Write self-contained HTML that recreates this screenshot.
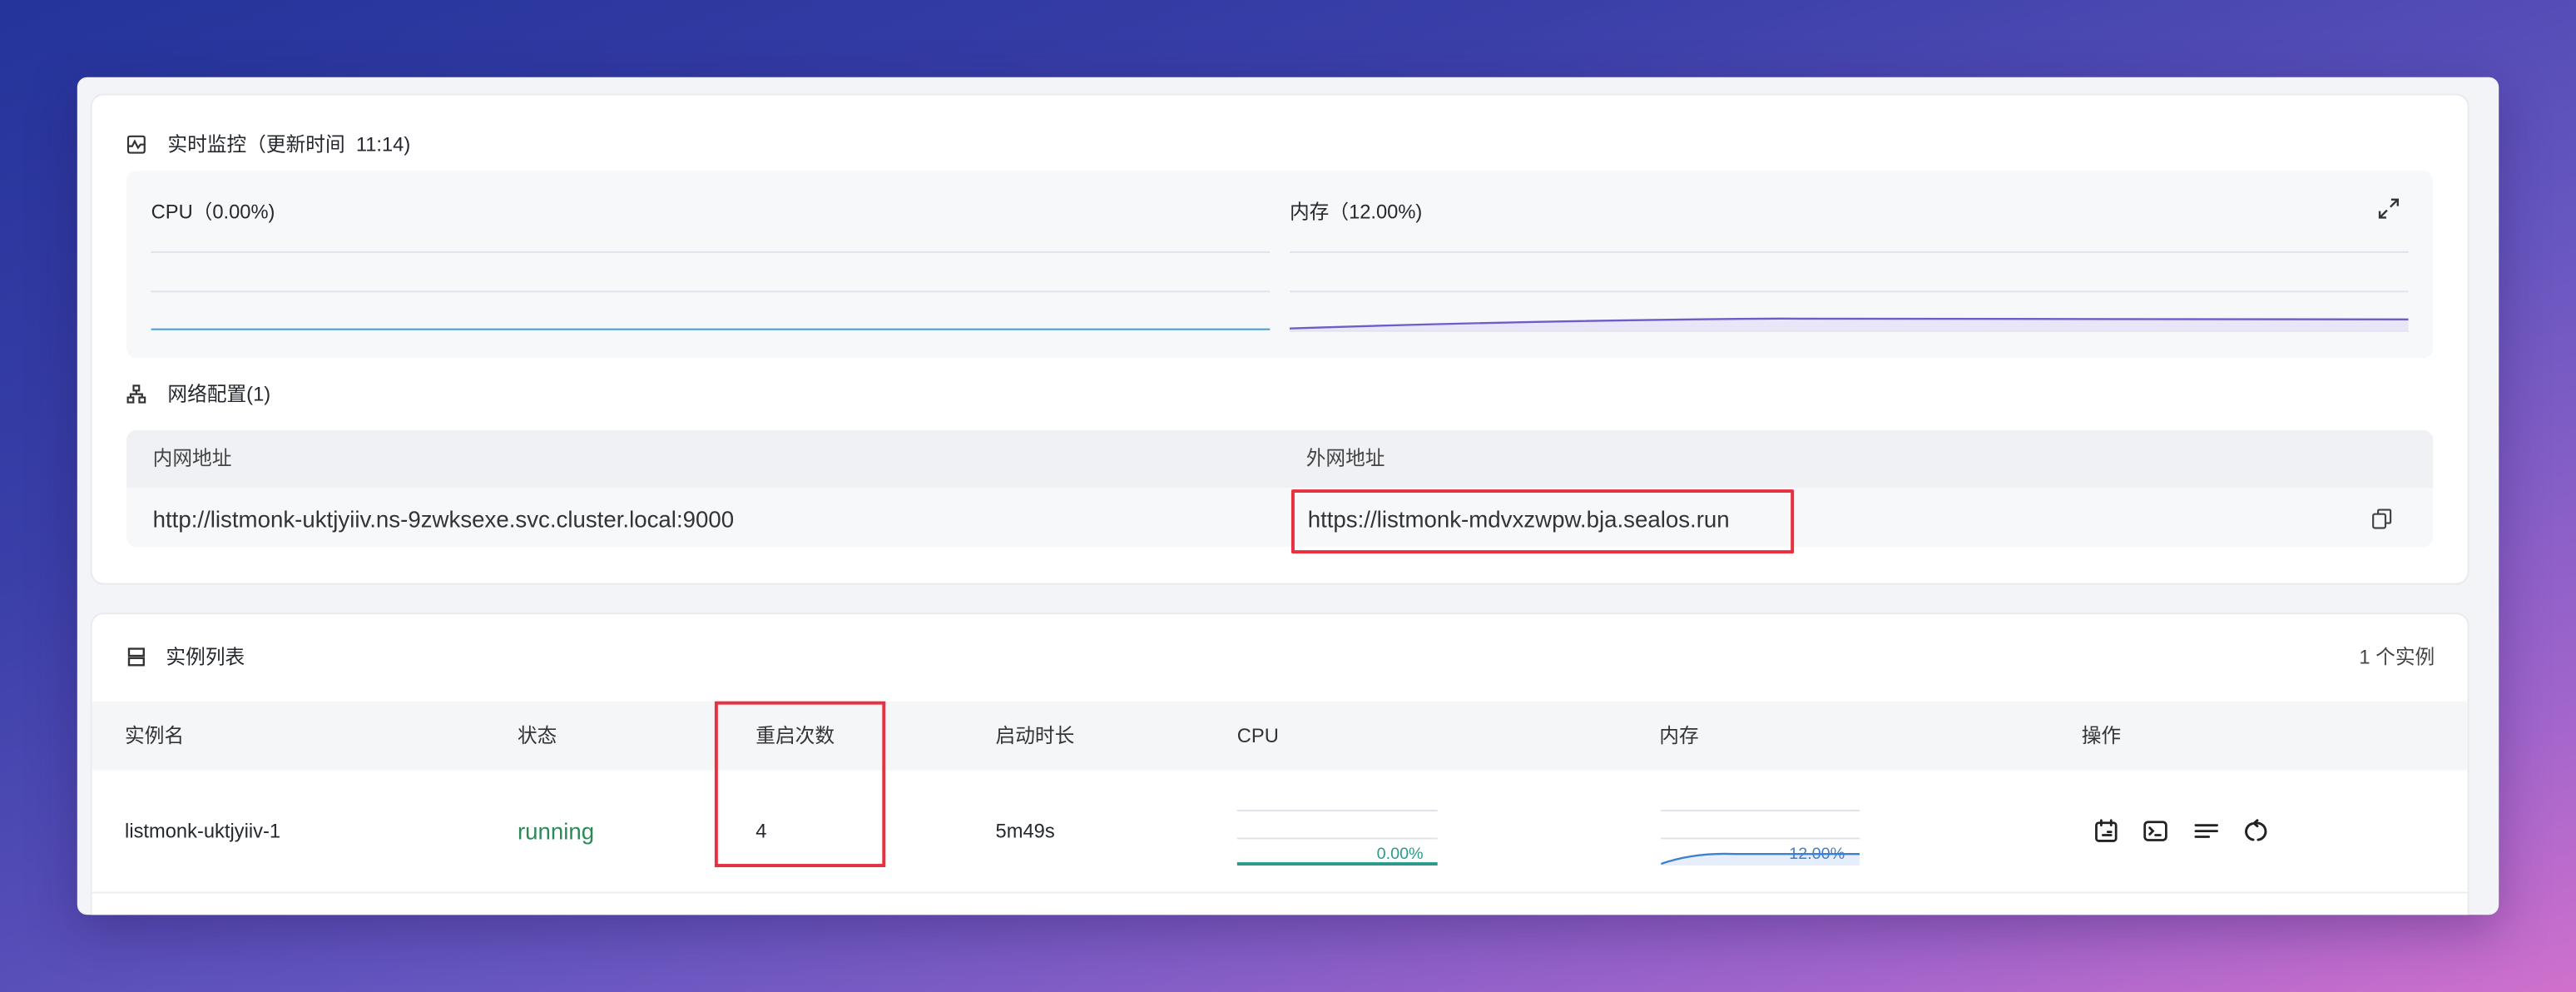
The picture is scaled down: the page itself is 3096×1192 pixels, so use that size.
<!DOCTYPE html>
<html><head><meta charset="utf-8">
<style>
*{margin:0;padding:0;box-sizing:border-box}
html,body{width:3096px;height:1192px;overflow:hidden}
body{background:linear-gradient(160deg,#24349a 0%,#3a3fa8 30%,#6656c0 60%,#a165cc 85%,#d070cc 100%);font-family:"Liberation Sans","Noto Sans CJK SC",sans-serif;color:#24282e}
#s{position:absolute;left:0;top:0;width:1568px;height:604px;transform:scale(1.9745,1.9735);transform-origin:0 0}
.a{position:absolute}
.win{left:47px;top:47px;width:1474px;height:510px;background:#f3f4f7;border-radius:6px;overflow:hidden;box-shadow:0 10px 30px rgba(40,20,90,.35)}
.card{background:#fff;border:1px solid #e8eaee;border-radius:8px}
.t{font-size:12px;white-space:nowrap;line-height:1}
.gl{height:1px;background:#dfe2ea}
svg{position:absolute}
</style></head><body><div id="s">
<div class="a win"></div>
<div class="a card" style="left:55px;top:57px;width:1448px;height:299px"></div>
<svg style="left:77px;top:82px" width="12" height="12" viewBox="0 0 12 12" fill="none" stroke="#333" stroke-width="1.1"><rect x="1" y="1" width="10" height="10" rx="1"/><path d="M1 7h2.5l1.5-3 2 4 1.5-2H11"/></svg>
<div class="a t" style="left:102px;top:82px;color:#24282e">实时监控（更新时间&nbsp;&nbsp;11:14)</div>
<div class="a" style="left:77px;top:104px;width:1404px;height:114px;background:#f7f8fa;border-radius:6px"></div>
<div class="a t" style="left:92px;top:123px">CPU（0.00%)</div>
<div class="a t" style="left:785px;top:123px">内存（12.00%)</div>
<div class="a gl" style="left:92px;top:153px;width:681px"></div>
<div class="a gl" style="left:92px;top:177px;width:681px"></div>
<div class="a" style="left:92px;top:200px;width:681px;height:1.2px;background:#3d9fd8"></div>
<div class="a gl" style="left:785px;top:153px;width:681px"></div>
<div class="a gl" style="left:785px;top:177px;width:681px"></div>
<div class="a gl" style="left:785px;top:201px;width:681px"></div>
<svg style="left:785px;top:190px" width="681" height="12" viewBox="0 0 681 12"><path d="M0 10 Q150 5 300 4 L681 4.5 L681 11 L0 11Z" fill="#e9e6fa"/><path d="M0 10 Q150 5 300 4 L681 4.5" stroke="#6e5cc8" stroke-width="1.2" fill="none"/></svg>
<svg style="left:1447px;top:120px" width="14" height="14" viewBox="0 0 14 14" fill="none" stroke="#333" stroke-width="1.2"><path d="M8.5 1.5h4v4M12.5 1.5l-4.5 4.5M5.5 12.5h-4v-4M1.5 12.5l4.5-4.5"/></svg>
<svg style="left:77px;top:234px" width="12" height="12" viewBox="0 0 12 12" fill="none" stroke="#333" stroke-width="1.1"><rect x="4.3" y="0.8" width="3.4" height="3" /><rect x="0.8" y="8" width="3.4" height="3"/><rect x="7.8" y="8" width="3.4" height="3"/><path d="M6 3.8v2M2.5 8V6h7v2"/></svg>
<div class="a t" style="left:102px;top:234px">网络配置(1)</div>
<div class="a" style="left:77px;top:262px;width:1404px;height:71px;background:#f7f8fa;border-radius:6px;overflow:hidden"><div style="height:35px;background:#f0f1f5"></div></div>
<div class="a t" style="left:93px;top:273px;color:#444">内网地址</div>
<div class="a t" style="left:795px;top:273px;color:#444">外网地址</div>
<div class="a t" style="left:93px;top:309px;font-size:14px;color:#333">http://listmonk-uktjyiiv.ns-9zwksexe.svc.cluster.local:9000</div>
<div class="a t" style="left:796px;top:309px;font-size:14px;color:#333">https://listmonk-mdvxzwpw.bja.sealos.run</div>
<div class="a" style="left:786px;top:298px;width:306px;height:39px;border:2.5px solid #e8303f;border-radius:1px"></div>
<svg style="left:1443px;top:309px" width="14" height="14" viewBox="0 0 14 14" fill="none" stroke="#444" stroke-width="1.1"><rect x="1.5" y="4" width="7.5" height="8.5" rx="1"/><path d="M4.5 4V2.2q0-.8.8-.8h6q.8 0 .8.8v6.5q0 .8-.8.8H9"/></svg>

<div class="a card" style="left:55px;top:373px;width:1448px;height:184px;border-bottom:none;border-radius:8px 8px 0 0"></div>
<svg style="left:77px;top:394px" width="12" height="12" viewBox="0 0 12 12" fill="none" stroke="#333" stroke-width="1.2"><rect x="1.5" y="1" width="9" height="4.3"/><rect x="1.5" y="6.7" width="9" height="4.3"/></svg>
<div class="a t" style="left:101px;top:394px">实例列表</div>
<div class="a t" style="left:1436px;top:394px;color:#444">1 个实例</div>
<div class="a" style="left:56px;top:427px;width:1446px;height:42px;background:#f5f6f8"></div>
<div class="a t" style="left:76px;top:442px;color:#333">实例名</div>
<div class="a t" style="left:315px;top:442px;color:#333">状态</div>
<div class="a t" style="left:460px;top:442px;color:#333">重启次数</div>
<div class="a t" style="left:606px;top:442px;color:#333">启动时长</div>
<div class="a t" style="left:753px;top:442px;color:#333">CPU</div>
<div class="a t" style="left:1010px;top:442px;color:#333">内存</div>
<div class="a t" style="left:1267px;top:442px;color:#333">操作</div>
<div class="a" style="left:56px;top:543px;width:1446px;height:1px;background:#eceef2"></div>
<div class="a t" style="left:76px;top:500px;color:#24282e">listmonk-uktjyiiv-1</div>
<div class="a t" style="left:315px;top:499px;font-size:14px;color:#2a8a58">running</div>
<div class="a t" style="left:460px;top:500px">4</div>
<div class="a t" style="left:606px;top:500px">5m49s</div>
<div class="a gl" style="left:753px;top:493px;width:122px"></div>
<div class="a gl" style="left:753px;top:510px;width:122px"></div>
<div class="a" style="left:753px;top:525px;width:122px;height:1.5px;background:#2a9a8a"></div>
<div class="a t" style="left:838px;top:516px;font-size:10px;color:#2a9a8a">0.00%</div>
<div class="a gl" style="left:1011px;top:493px;width:121px"></div>
<div class="a gl" style="left:1011px;top:510px;width:121px"></div>
<svg style="left:1011px;top:515px" width="121" height="13" viewBox="0 0 121 13"><path d="M0 11 Q20 4 45 5 L121 5 L121 12 L0 12Z" fill="#e6eefb"/><path d="M0 11 Q20 4 45 5 L121 5" stroke="#3d7fd0" stroke-width="1.2" fill="none"/></svg>
<div class="a t" style="left:1089px;top:516px;font-size:10px;color:#3d7fd0;background:transparent">12.00%</div>
<div class="a" style="left:435px;top:427px;width:104px;height:101px;border:2.5px solid #e8303f"></div>
<svg style="left:1274px;top:498px" width="16" height="16" viewBox="0 0 16 16" fill="none" stroke="#222" stroke-width="1.4" stroke-linecap="round"><rect x="2" y="3" width="12" height="11" rx="1.5"/><path d="M5 1.5v3M11 1.5v3M6 10.5h5M9 8.5h2"/></svg>
<svg style="left:1304px;top:498px" width="16" height="16" viewBox="0 0 16 16" fill="none" stroke="#222" stroke-width="1.4" stroke-linecap="round"><rect x="1.5" y="2.5" width="13" height="11" rx="2"/><path d="M4.5 6l2 2-2 2M8 10.5h3"/></svg>
<svg style="left:1335px;top:498px" width="16" height="16" viewBox="0 0 16 16" fill="none" stroke="#222" stroke-width="1.4" stroke-linecap="round"><path d="M1.5 4.5h13M1.5 8h13M1.5 11.5h8"/></svg>
<svg style="left:1365px;top:498px" width="16" height="16" viewBox="0 0 16 16" fill="none" stroke="#222" stroke-width="1.5" stroke-linecap="round"><path d="M6 3.5A5 5 0 0 0 6.5 13.3M9.5 13.3A5 5 0 0 0 8.5 3.2"/><path d="M9 1.5L7 3.3 9 5"/></svg>
</div></body></html>
